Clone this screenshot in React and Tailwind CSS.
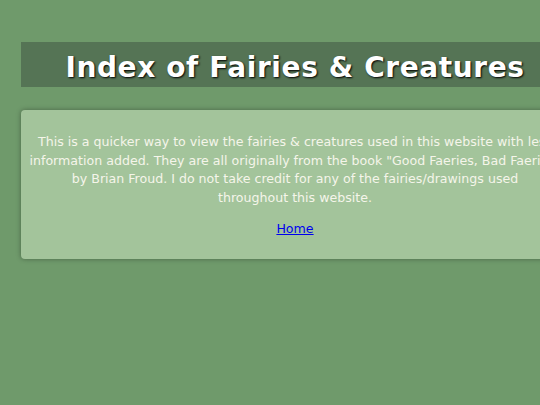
import * as React from "react";

const font = { fontFamily: '"Comic Sans MS", "DejaVu Sans", sans-serif' };

export default function App() {
  return (
    <div
      className="w-[540px] h-[405px] overflow-hidden bg-[#6f9a6b]"
      style={font}
    >
      <div className="w-[548px] ml-[21px] pt-[42px]">
        <header className="h-[45px] pt-[7px] bg-[#557455] flex items-center justify-center">
          <h1 className="text-[28px] font-bold text-white tracking-[0.6px] [text-shadow:1px_1px_2px_#000]">
            Index of Fairies &amp; Creatures
          </h1>
        </header>

        <section className="mt-[23px] h-[149px] bg-[#a3c49b] rounded-[4px] shadow-[0_0_5px_rgba(0,0,0,0.35)] pt-[23px] text-center text-[12.6px] leading-[18.7px] text-[#f5f5ea]">
          <p>
            This is a quicker way to view the fairies &amp; creatures used in this website with less
            <br />
            information added. They are all originally from the book "Good Faeries, Bad Faeries"
            <br />
            by Brian Froud. I do not take credit for any of the fairies/drawings used
            <br />
            throughout this website.
          </p>
          <p className="mt-[12px]">
            <a href="#" className="text-[#0000ee] underline">
              Home
            </a>
          </p>
        </section>
      </div>
    </div>
  );
}
